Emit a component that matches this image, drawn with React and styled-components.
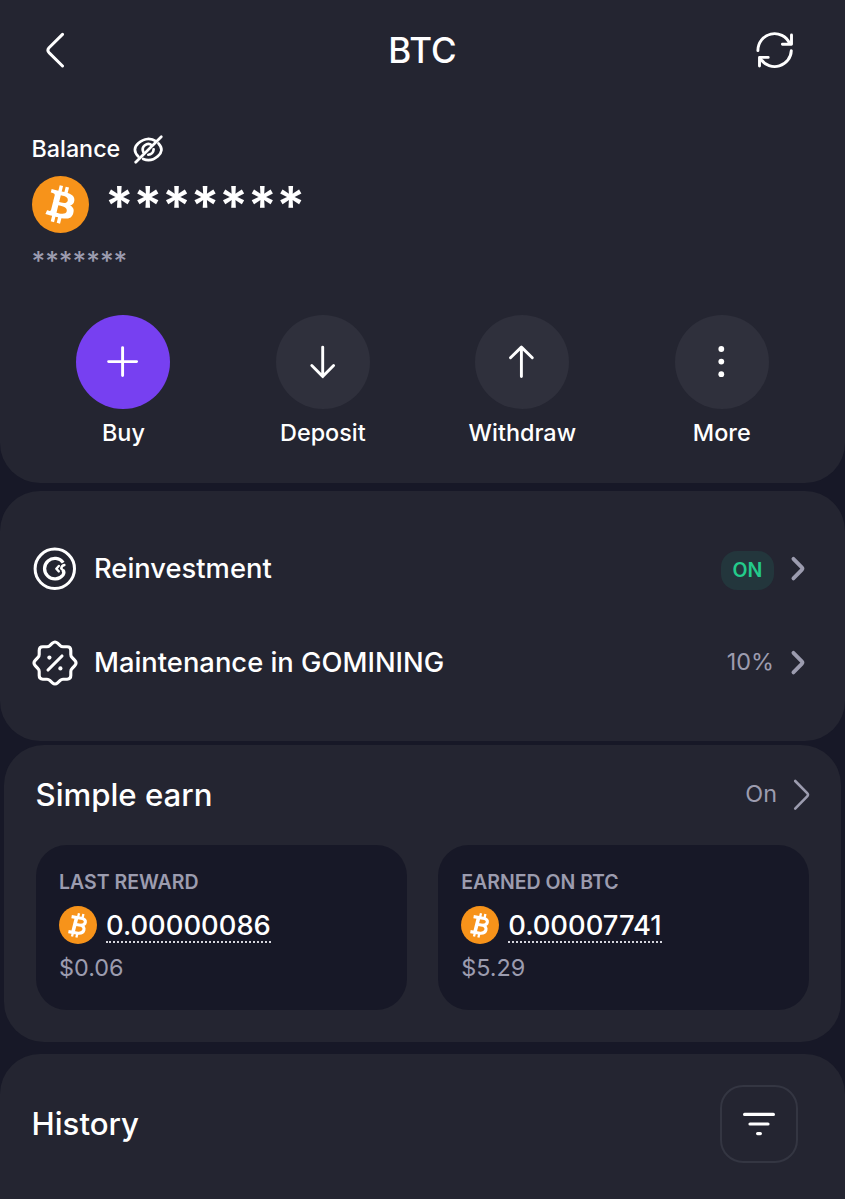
import React from 'react';
import styled, { createGlobalStyle } from 'styled-components';

const GlobalStyle = createGlobalStyle`
    * {
        box-sizing: border-box;
    }
    body {
        margin: 0;
        background: #171827;
        color: #fff;
        font-family: 'Inter', 'Liberation Sans', sans-serif;
        font-weight: 500;
    }
`

const actions = [
    { label: 'Buy', icon: 'plus', primary: true },
    { label: 'Deposit', icon: 'down' },
    { label: 'Withdraw', icon: 'up' },
    { label: 'More', icon: 'dots' },
];

const rewards = [
    { title: 'LAST REWARD', amount: '0.00000086', usd: '$0.06' },
    { title: 'EARNED ON BTC', amount: '0.00007741', usd: '$5.29' },
];

// icons
const BackIcon = () => (
    <Icon width="20" height="36" viewBox="0 0 20 36" $stroke={3}>
        <path d="M17.5 2.4 L4 15.8 Q1.8 18.2 4 20.6 L17.5 34" />
    </Icon>
)

const RefreshIcon = () => (
    <Icon width="40" height="40" viewBox="0 0 40 40" $stroke={2.9}>
        <path d="M2.9 20.6 A16.6 16.6 0 0 1 34.6 13.4" />
        <path d="M36.5 4.9 V14.2 H27.4" />
        <path d="M36.3 20.6 A16.6 16.6 0 0 1 6 29.4" />
        <path d="M4.5 36 V27.4 H13.2" />
    </Icon>
)

const HiddenIcon = () => (
    <Icon width="31" height="31" viewBox="0 0 32 32" $stroke={2.8}>
        <path d="M5.5 23.2 C0.8 18.4 0.8 13.9 5.5 9.6 C11.5 4 18.5 4 24 7.6" />
        <path d="M26.3 9.8 C30.8 14.6 30.2 18.8 25.6 22.9 C21 27 15.5 27.8 10.5 25.8" />
        <path d="M10.6 18.6 A5.8 5.8 0 0 1 19.4 11.6" />
        <path d="M21.3 15.8 A5.8 5.8 0 0 1 15.8 21.4" />
        <path d="M2.8 29.2 L29.2 2.8" />
    </Icon>
)

const ActionIcon = ({ name }) => (
    <Icon width="36" height="36" viewBox="0 0 36 36" $stroke={2.9}>
        {name === 'plus' && <path d="M17.6 3.6 V31.6 M3.6 17.6 H31.6" />}
        {name === 'down' && <path d="M17.7 3.1 V32.6 M6.8 21.6 L17.7 32.6 L28.6 21.6" />}
        {name === 'up' && <path d="M17.4 32.6 V3.1 M6.5 13.8 L17.4 3.1 L28.3 13.8" />}
        {name === 'dots' && (
            <g fill="#fff" stroke="none">
                <circle cx="17.3" cy="5" r="2.9" />
                <circle cx="17.3" cy="17.6" r="2.9" />
                <circle cx="17.3" cy="30.2" r="2.9" />
            </g>
        )}
    </Icon>
)

const ReinvestIcon = () => (
    <Icon width="46" height="46" viewBox="0 0 46 46" $stroke={3}>
        <circle cx="22.8" cy="22.8" r="19.7" />
        <path d="M31.2 16.6 A10.3 10.3 0 1 0 31 29 Q32.8 26.4 30.8 24.2" strokeLinecap="butt" strokeWidth="3.3" />
        <path d="M26.8 20 L24.3 22.7 L26.8 25.4 M32.4 19 Q29.6 19.6 29.2 22.4 L31.4 24.8" strokeWidth="2.4" />
    </Icon>
)

const PercentIcon = () => (
    <Icon width="46" height="46" viewBox="0 0 46 46" $stroke={3.1}>
        <path d="M20.4 3.2 Q23 0.8 25.6 3.2 L28.2 5.7 Q29.4 6.8 31 6.8 H35.2 Q38.8 6.8 38.8 10.4 V14.4 Q38.8 16.2 40 17.4 L42.8 20.4 Q45.2 23 42.8 25.6 L40 28.6 Q38.8 29.8 38.8 31.6 V35.6 Q38.8 39.2 35.2 39.2 H31 Q29.4 39.2 28.2 40.3 L25.6 42.8 Q23 45.2 20.4 42.8 L17.8 40.3 Q16.6 39.2 15 39.2 H10.8 Q7.2 39.2 7.2 35.6 V31.6 Q7.2 29.8 6 28.6 L3.2 25.6 Q0.8 23 3.2 20.4 L6 17.4 Q7.2 16.2 7.2 14.4 V10.4 Q7.2 6.8 10.8 6.8 H15 Q16.6 6.8 17.8 5.7 Z" />
        <path d="M16 30 L30 16" />
        <circle cx="17.4" cy="17.6" r="2.1" fill="#fff" stroke="none" />
        <circle cx="28.4" cy="28.4" r="2.1" fill="#fff" stroke="none" />
    </Icon>
)

const Chevron = () => (
    <Icon width="16" height="28" viewBox="0 0 16 28" $color="#9c9caf" $stroke={3.8}>
        <path d="M3.4 3.8 L11.8 12.4 Q13 13.6 11.8 14.8 L3.4 23.4" />
    </Icon>
)

const ThinChevron = () => (
    <Icon width="18" height="32" viewBox="0 0 18 32" $color="#9c9caf" $stroke={2.6}>
        <path d="M2.2 2 L14.2 14.2 Q15.8 15.8 14.2 17.4 L2.2 29.6" />
    </Icon>
)

const FilterIcon = () => (
    <Icon width="36" height="28" viewBox="0 0 36 28" $stroke={3.2}>
        <path d="M3.6 4.4 H32.4 M9 14 H27 M16.6 23.6 H19.4" />
    </Icon>
)

const BtcLogo = () => (
    <Coin width="57" height="57" viewBox="0 0 32 32">
        <circle cx="16" cy="16" r="16" fill="#f7931a" />
        <path
            fill="#fff"
            transform="translate(16 16) scale(1.08) translate(-16 -16)"
            d="M23.189 14.02c.314-2.096-1.283-3.223-3.465-3.975l.708-2.84-1.728-.43-.69 2.765c-.454-.114-.92-.22-1.385-.326l.695-2.783L15.596 6l-.708 2.839c-.376-.086-.746-.17-1.104-.26l.002-.009-2.384-.595-.46 1.846s1.283.294 1.256.312c.7.175.826.638.805 1.006l-.806 3.235c.048.012.11.03.18.057l-.183-.045-1.13 4.532c-.086.212-.303.531-.793.41.018.025-1.256-.313-1.256-.313l-.858 1.978 2.25.561c.418.105.828.215 1.231.318l-.715 2.872 1.727.43.708-2.84c.472.127.93.245 1.378.357l-.706 2.828 1.728.43.715-2.866c2.948.558 5.164.333 6.097-2.333.752-2.146-.037-3.385-1.588-4.192 1.13-.26 1.98-1.003 2.207-2.538zm-3.95 5.538c-.533 2.147-4.148.986-5.32.695l.95-3.805c1.172.293 4.929.872 4.37 3.11zm.535-5.569c-.487 1.953-3.495.96-4.47.717l.86-3.45c.975.243 4.118.696 3.61 2.733z"
        />
    </Coin>
)

const BtcSmall = () => (
    <Coin width="38" height="38" viewBox="0 0 38 38">
        <circle cx="19" cy="19" r="19" fill="#f7931a" />
        <g fill="none" stroke="#fff" strokeWidth="3.1">
            <path d="M12.6 10.6 L22 12.2 C28.4 13.2 27.4 19.4 21.4 19.2 L16 18.3 M21.2 19.1 C27.6 20.8 25.4 27.8 19 27.2 L9.4 25.6" />
            <path d="M17.7 11.2 L13.9 26.4" strokeWidth="3.6" />
            <path d="M20 7.2 L19 11.6 M24.4 8 L23.4 12.4 M14 26.4 L13 30.6 M18.4 27.2 L17.4 31.4" strokeWidth="2.3" />
        </g>
    </Coin>
)

const App = () => {
    return (
        <Page>
            <GlobalStyle />
            <Header>
                <BackIcon />
                <Title>BTC</Title>
                <RefreshIcon />
            </Header>

            <BalanceCard>
                <BalanceLabel>
                    <span>Balance</span>
                    <HiddenIcon />
                </BalanceLabel>
                <AmountRow>
                    <BtcLogo />
                    <Amount>*******</Amount>
                </AmountRow>
                <Fiat>*******</Fiat>
                <Actions>
                    {actions.map(action => (
                        <Action key={action.label}>
                            <Round $primary={action.primary}>
                                <ActionIcon name={action.icon} />
                            </Round>
                            {action.label}
                        </Action>
                    ))}
                </Actions>
            </BalanceCard>

            <SettingsCard>
                <SettingRow>
                    <ReinvestIcon />
                    <SettingName>Reinvestment</SettingName>
                    <Badge>ON</Badge>
                    <Chevron />
                </SettingRow>
                <SettingRow>
                    <PercentIcon />
                    <SettingName>Maintenance in GOMINING</SettingName>
                    <Muted>10%</Muted>
                    <Chevron />
                </SettingRow>
            </SettingsCard>

            <EarnCard>
                <EarnHeader>
                    <Heading>Simple earn</Heading>
                    <EarnStatus>
                        <Muted>On</Muted>
                        <ThinChevron />
                    </EarnStatus>
                </EarnHeader>
                <Tiles>
                    {rewards.map(item => (
                        <Tile key={item.title}>
                            <TileTitle>{item.title}</TileTitle>
                            <TileAmount>
                                <BtcSmall />
                                <Dotted>{item.amount}</Dotted>
                            </TileAmount>
                            <TileUsd>{item.usd}</TileUsd>
                        </Tile>
                    ))}
                </Tiles>
            </EarnCard>

            <HistoryCard>
                <Heading>History</Heading>
                <FilterButton>
                    <FilterIcon />
                </FilterButton>
            </HistoryCard>
        </Page>
    )
}

const Page = styled.div`
    display: flex;
    flex-direction: column;
    width: 845px;
    height: 1199px;
    overflow: hidden;
    background: #171827;
`

const Icon = styled.svg`
    display: block;
    flex: none;
    fill: none;
    stroke: ${props => props.$color || '#fff'};
    stroke-width: ${props => props.$stroke};
    stroke-linecap: round;
    stroke-linejoin: round;
`

const Coin = styled.svg`
    display: block;
    flex: none;
`

const Header = styled.header`
    display: grid;
    grid-template-columns: 1fr auto 1fr;
    align-items: center;
    flex: none;
    height: 100px;
    padding: 0 50px 0 45px;
    background: #242531;

    svg:last-child {
        justify-self: end;
    }
`

const Title = styled.h1`
    margin: 0 -5px 0 0;
    font-size: 35px;
    font-weight: 500;
    line-height: 42px;
`

const Card = styled.section`
    flex: none;
    border-radius: 40px;
    background: #242531;
`

const BalanceCard = styled(Card)`
    height: 382.5px;
    padding: 33px 23.5px 0 23.7px;
    border-radius: 0 0 40px 40px;
`

const BalanceLabel = styled.div`
    display: flex;
    align-items: center;
    gap: 13px;
    height: 32px;
    padding-left: 7.8px;
    font-size: 23.3px;

    span {
        padding-bottom: 1px;
    }
`

const AmountRow = styled.div`
    display: flex;
    gap: 16px;
    height: 57px;
    margin-top: 11px;
    padding-left: 8.3px;
`

const Amount = styled.div`
    font-size: 53px;
    font-weight: 600;
    line-height: 60px;
`

const Fiat = styled.div`
    height: 30px;
    margin-top: 13px;
    padding-left: 7.8px;
    color: #9c9caf;
    font-size: 26.3px;
    line-height: 30px;
`

const Actions = styled.div`
    display: grid;
    grid-template-columns: repeat(4, 1fr);
    margin-top: 38.5px;
`

const Action = styled.div`
    display: flex;
    flex-direction: column;
    align-items: center;
    gap: 9.5px;
    font-size: 23.4px;
    line-height: 30px;
`

const Round = styled.div`
    display: flex;
    align-items: center;
    justify-content: center;
    width: 94px;
    height: 94px;
    border-radius: 50%;
    background: ${props => (props.$primary ? '#7740f1' : '#2f303c')};
`

const SettingsCard = styled(Card)`
    height: 250px;
    margin-top: 8px;
    padding: 31px 39px 0 32px;
`

const SettingRow = styled.div`
    display: flex;
    align-items: center;
    height: 94px;
`

const SettingName = styled.div`
    flex: 1;
    margin-left: 16px;
    font-size: 27.35px;
    line-height: 34px;
`

const Badge = styled.div`
    width: 53px;
    height: 39px;
    margin: 3px 16px 0 0;
    border-radius: 16px;
    background: #23363c;
    color: #24cb8b;
    font-size: 19.5px;
    font-weight: 600;
    line-height: 38px;
    text-align: center;
`

const Muted = styled.div`
    margin: 0 16px 2px 0;
    color: #9c9caf;
    font-size: 23.4px;
    font-weight: 400;
    line-height: 30px;
`

const EarnCard = styled(Card)`
    height: 297.5px;
    margin: 4px 4px 0;
    padding: 30px 32px 0 31.5px;
`

const EarnHeader = styled.div`
    display: flex;
    align-items: center;
    justify-content: space-between;
    height: 40px;
`

const Heading = styled.h2`
    margin: 0;
    font-size: 31.2px;
    font-weight: 500;
    line-height: 40px;
`

const EarnStatus = styled.div`
    display: flex;
    align-items: center;
    margin-right: -2px;
`

const Tiles = styled.div`
    display: grid;
    grid-template-columns: 1fr 1fr;
    gap: 31px;
    margin-top: 30.5px;
`

const Tile = styled.div`
    height: 165px;
    padding: 25px 23.5px 0;
    border-radius: 31px;
    background: #171827;
`

const TileTitle = styled.div`
    color: #9c9caf;
    font-size: 19.5px;
    font-weight: 600;
    line-height: 24px;
`

const TileAmount = styled.div`
    display: flex;
    gap: 9px;
    height: 38px;
    margin-top: 12px;
`

const Dotted = styled.div`
    height: 37px;
    border-bottom: 2px dotted #d5d5dd;
    font-size: 27.35px;
    line-height: 39px;
`

const TileUsd = styled.div`
    margin-top: 8px;
    color: #9c9caf;
    font-size: 23.4px;
    font-weight: 400;
    line-height: 31px;
`

const HistoryCard = styled(Card)`
    display: flex;
    justify-content: space-between;
    align-items: center;
    height: 146px;
    margin-top: 11.5px;
    padding: 0 47px 5px 31.5px;
    border-radius: 40px 40px 0 0;
`

const FilterButton = styled.button`
    display: flex;
    align-items: center;
    justify-content: center;
    width: 78px;
    height: 78px;
    padding: 0;
    border: 2px solid #343642;
    border-radius: 23px;
    background: transparent;
`

export default App;
